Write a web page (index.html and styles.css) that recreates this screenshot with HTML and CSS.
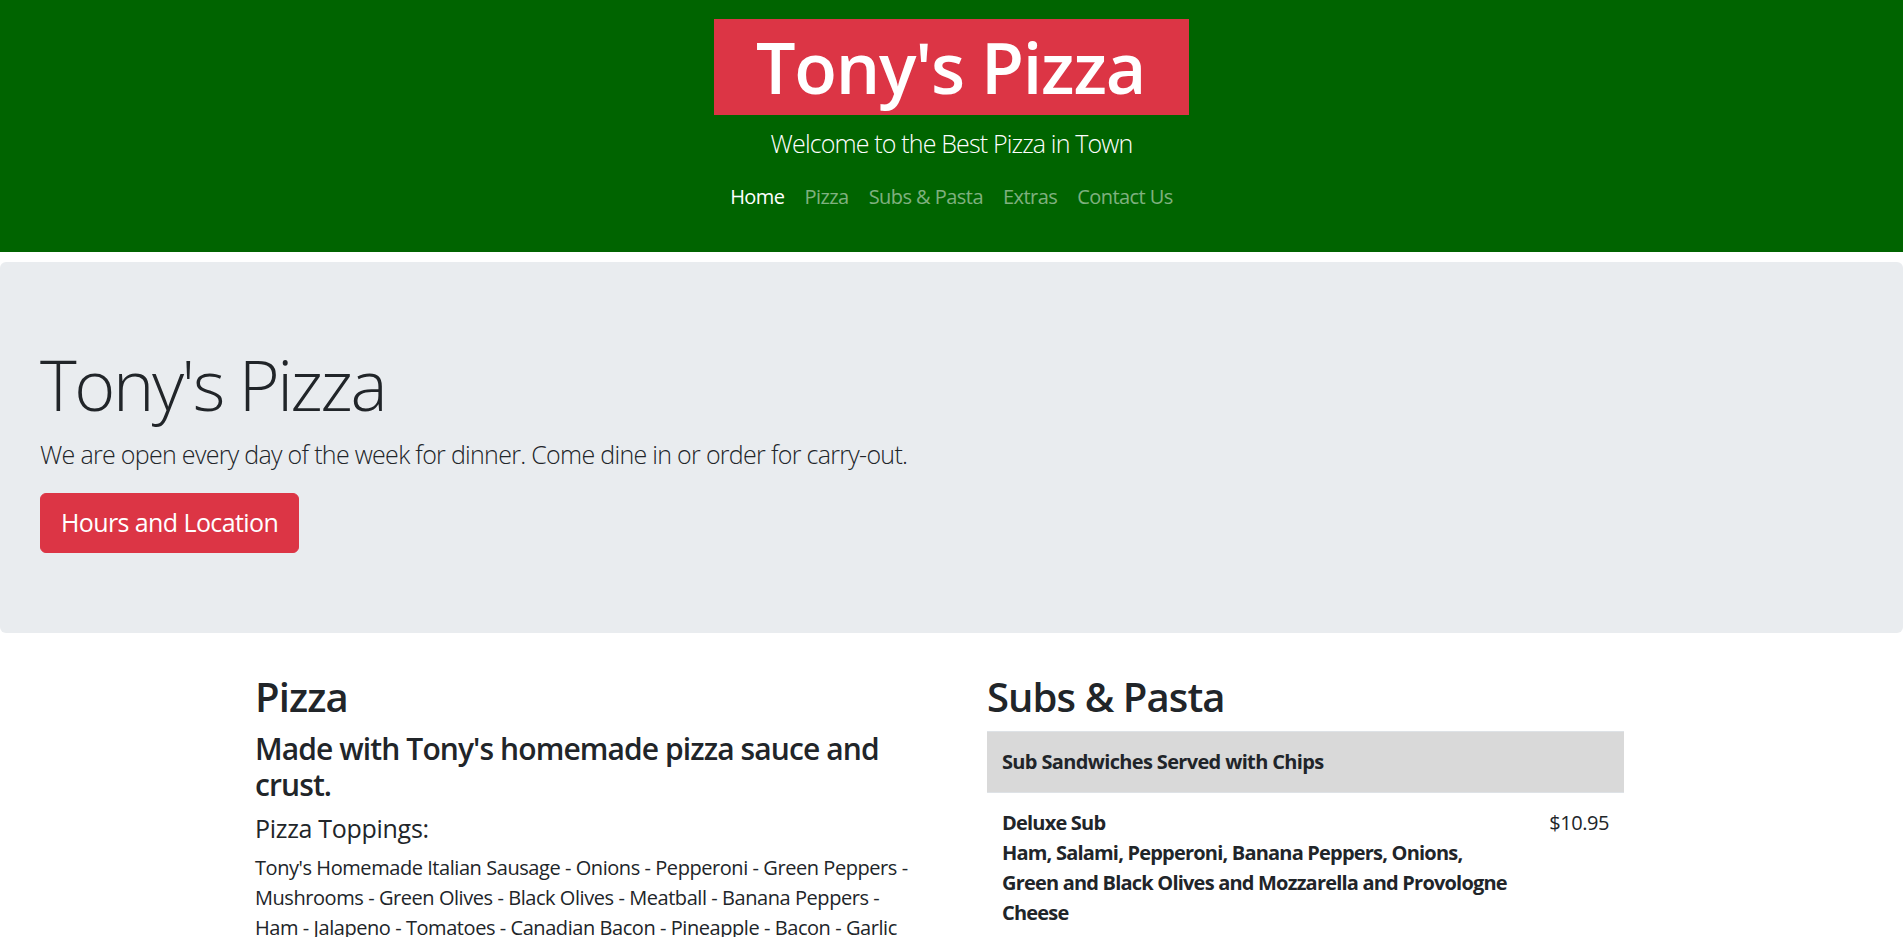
FILE: index.html
```html
<!DOCTYPE html>
<html lang="en">
<head>
<meta charset="utf-8">
<title>Tony's Pizza</title>
<link rel="stylesheet" href="styles.css">
</head>
<body>
<header class="site-header">
  <h1 class="brand">Tony's Pizza</h1>
  <p class="tagline">Welcome to the Best Pizza in Town</p>
  <nav class="main-nav">
    <a class="active" href="#">Home</a>
    <a href="#">Pizza</a>
    <a href="#">Subs &amp; Pasta</a>
    <a href="#">Extras</a>
    <a href="#">Contact Us</a>
  </nav>
</header>

<section class="hero">
  <h1 class="hero-title">Tony's Pizza</h1>
  <p class="hero-lead">We are open every day of the week for dinner. Come dine in or order for carry-out.</p>
  <a class="btn-hours" href="#">Hours and Location</a>
</section>

<main class="menu">
  <section class="menu-col">
    <h2 class="col-title">Pizza</h2>
    <h4 class="col-sub">Made with Tony's homemade pizza sauce and crust.</h4>
    <h5 class="col-minor">Pizza Toppings:</h5>
    <p class="toppings">Tony's Homemade Italian Sausage - Onions - Pepperoni - Green Peppers - Mushrooms - Green Olives - Black Olives - Meatball - Banana Peppers - Ham - Jalapeno - Tomatoes - Canadian Bacon - Pineapple - Bacon - Garlic <span class="keep">- Anchovies</span> - Extra Cheese</p>
    <h5 class="col-minor">Specialty Pizzas:</h5>
    <p class="toppings">Tony's Deluxe - Meat Lovers - Veggie - Hawaiian - BBQ Chicken</p>
  </section>

  <section class="menu-col">
    <h2 class="col-title">Subs &amp; Pasta</h2>
    <table class="menu-table">
      <thead>
        <tr><th colspan="2">Sub Sandwiches Served with Chips</th></tr>
      </thead>
      <tbody>
        <tr>
          <td class="item">Deluxe Sub<br>Ham, Salami, Pepperoni, Banana Peppers, Onions, Green and Black Olives and Mozzarella and Provologne Cheese</td>
          <td class="price">$10.95</td>
        </tr>
        <tr>
          <td class="item">Italian Sausage Sub<br>Tony's Homemade Italian Sausage with Sauce and Mozzarella Cheese</td>
          <td class="price">$9.95</td>
        </tr>
        <tr>
          <td class="item">Meatball Sub<br>Meatballs with Sauce and Mozzarella Cheese</td>
          <td class="price">$9.95</td>
        </tr>
      </tbody>
    </table>
  </section>
</main>
</body>
</html>
```
FILE: styles.css
```css
* { box-sizing: border-box; }

html { font-size: 20px; }

body {
  margin: 0;
  font-family: "Open Sans", "Noto Sans", "Liberation Sans", sans-serif;
  color: #212529;
  line-height: 1.5;
  letter-spacing: -0.44px;
  background: #fff;
}

/* ---------- header ---------- */
.site-header {
  background: #006400;
  text-align: center;
  padding: 19px 0 30px;
}

.brand {
  display: inline-block;
  margin: 0;
  padding: 0 44px 0 42px;
  background: #dc3545;
  color: #fff;
  font-size: 70px;
  font-weight: 600;
  line-height: 96px;
  letter-spacing: -1.2px;
}

.tagline {
  margin: 10px 0 0;
  color: #fff;
  font-size: 25px;
  font-weight: 300;
  line-height: 1.5;
  letter-spacing: -0.85px;
}

.main-nav {
  display: flex;
  justify-content: center;
  margin-top: 9px;
}

.main-nav a {
  padding: 10px;
  color: rgba(255, 255, 255, 0.5);
  text-decoration: none;
  font-size: 20px;
  line-height: 30px;
  letter-spacing: -0.55px;
}

.main-nav a.active { color: #fff; }

/* ---------- hero ---------- */
.hero {
  margin: 10px 0 40px;
  padding: 80px 40px;
  background: #e9ecef;
  border-radius: 6px;
}

.hero-title {
  margin: 0 0 10px;
  font-size: 70px;
  font-weight: 300;
  line-height: 1.2;
  letter-spacing: -2.4px;
}

.hero-lead {
  margin: 0 0 20px;
  font-size: 25px;
  font-weight: 300;
  line-height: 1.5;
  letter-spacing: -0.7px;
}

.btn-hours {
  display: inline-block;
  padding: 10px 20px;
  border: 1px solid #dc3545;
  border-radius: 6px;
  background: #dc3545;
  color: #fff;
  font-size: 25px;
  line-height: 1.5;
  letter-spacing: -0.6px;
  text-decoration: none;
}

/* ---------- menu ---------- */
.menu {
  display: grid;
  grid-template-columns: 665px 637px;
  column-gap: 67px;
  width: 1393px;
  margin: 0 auto;
  padding-bottom: 40px;
}

.col-title {
  margin: 0 0 10px;
  font-size: 40px;
  font-weight: 600;
  line-height: 1.2;
  letter-spacing: -0.9px;
}

.col-sub {
  margin: 0 0 10px;
  font-size: 30px;
  font-weight: 600;
  line-height: 1.2;
  letter-spacing: -0.9px;
}

.col-minor {
  margin: 0 0 10px;
  font-size: 25px;
  font-weight: 500;
  line-height: 1.2;
  letter-spacing: -0.3px;
}

.toppings {
  margin: 0 0 20px;
  font-size: 20px;
}

.toppings .keep { white-space: nowrap; }

.menu-table {
  width: 100%;
  border-collapse: collapse;
}

.menu-table th {
  padding: 15px;
  background: #d9d9d9;
  text-align: left;
  font-weight: 700;
  letter-spacing: -0.65px;
  border-top: 1px solid #dee2e6;
}

.menu-table td {
  padding: 15px;
  vertical-align: top;
  border-top: 1px solid #dee2e6;
}

.menu-table .item {
  font-weight: 700;
  letter-spacing: -0.8px;
}

.menu-table .price {
  width: 1%;
  white-space: nowrap;
  text-align: right;
  font-weight: 400;
}
```
